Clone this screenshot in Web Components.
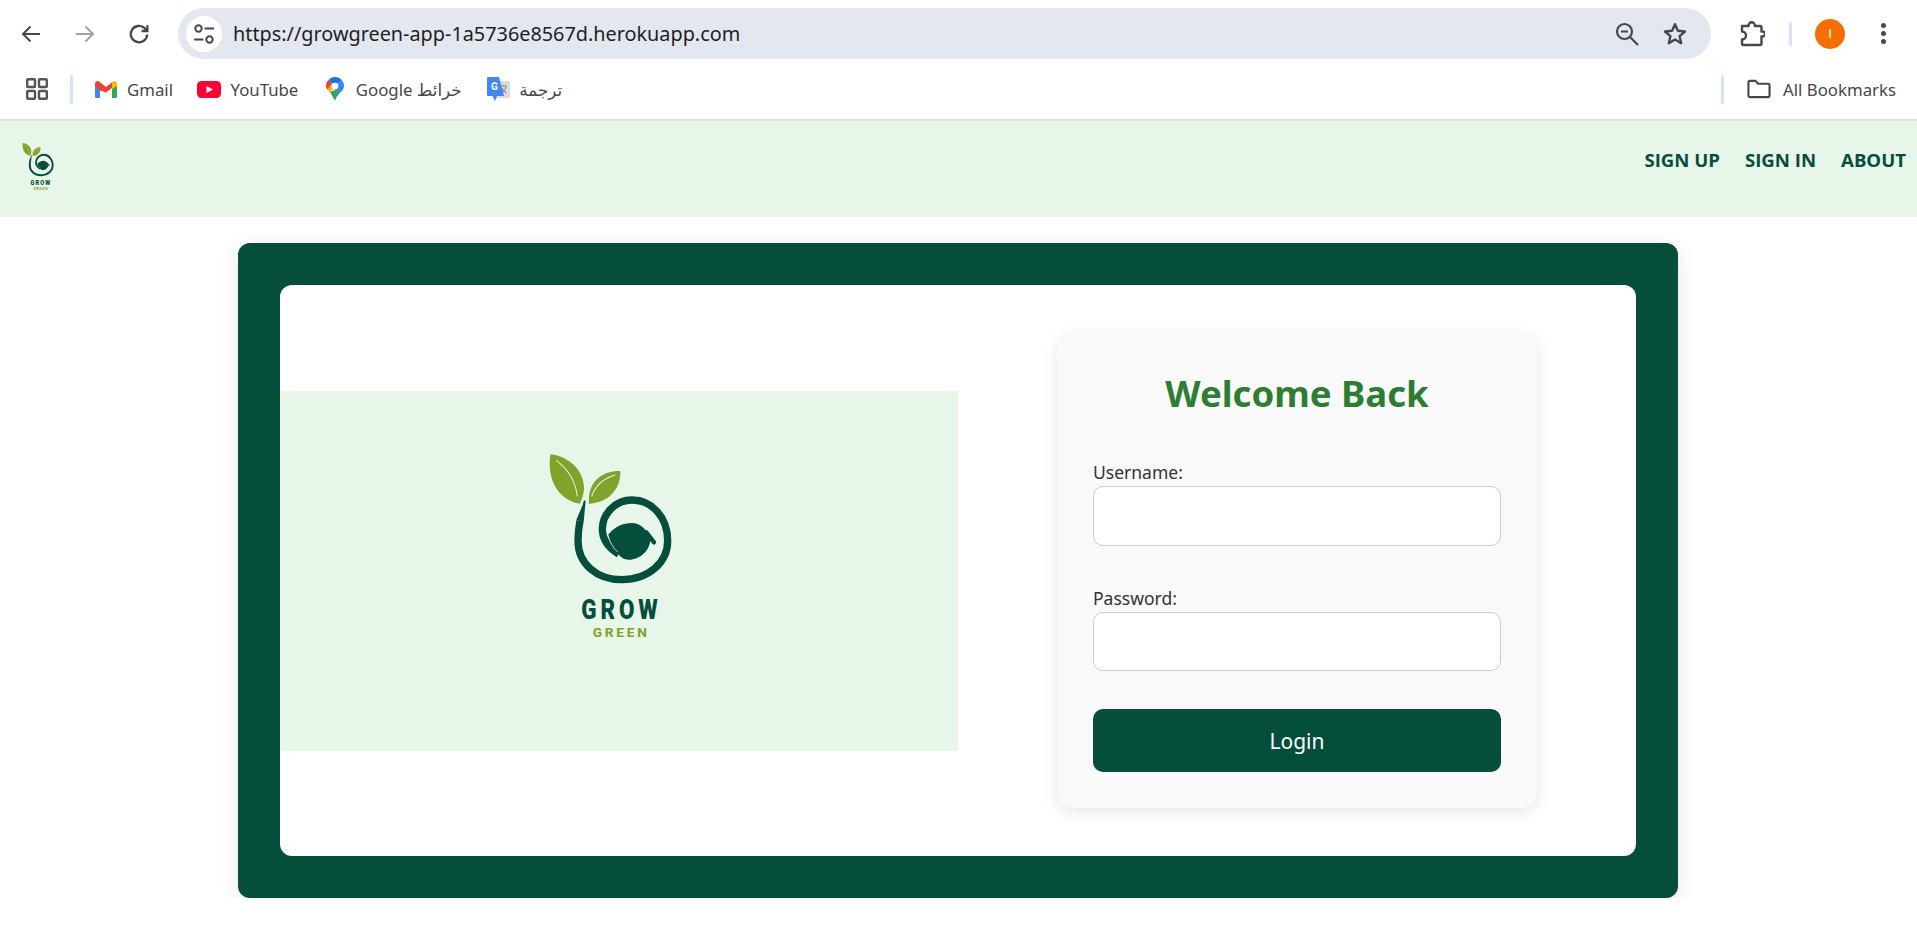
<!DOCTYPE html>
<html lang="en">
<head>
<meta charset="utf-8">
<title>Grow Green</title>
<style>
  html, body { margin: 0; padding: 0; background: #fff; overflow: hidden; }
  body { font-family: "Noto Sans", "DejaVu Sans", sans-serif; }
</style>
</head>
<body>
<browser-toolbar url="https://growgreen-app-1a5736e8567d.herokuapp.com"></browser-toolbar>
<bookmarks-bar></bookmarks-bar>
<site-nav>
  <nav-link>SIGN UP</nav-link>
  <nav-link>SIGN IN</nav-link>
  <nav-link>ABOUT</nav-link>
</site-nav>
<login-page></login-page>

<script>
const logoMarkup = `
  <svg viewBox="47 33 500 720" xmlns="http://www.w3.org/2000/svg">
    <path fill="#7fa32b" d="M90 46C148 52 192 98 191 150C190 168 184 183 178 194C122 186 78 132 90 46Z"/>
    <path fill="none" stroke="#e8f5e9" stroke-width="3" d="M108 65C140 88 165 125 171 172"/>
    <path fill="#7fa32b" d="M300 96C252 94 212 122 206 170L205 194C262 192 302 152 300 96Z"/>
    <path fill="none" stroke="#e8f5e9" stroke-width="3" d="M285 108C250 118 225 140 214 172"/>
    <path fill="#044e3b" d="M191 184L196 186C194 205 192 225 190 248L168 243C176 222 186 205 191 184Z"/>
    <path fill="none" stroke="#044e3b" stroke-width="22" d="M179 245C175 265 173 285 173 305C173 375 230 422 305 422C385 422 442 370 442 305C442 235 395 183 335 183C285 183 246 225 246 270C246 298 262 325 295 345"/>
    <path fill="#044e3b" d="M263 288C283 262 308 252 335 252C358 252 376 268 390 296C392 332 360 362 325 362C312 362 300 356 290 340C275 325 266 308 263 288Z"/>
    <path fill="none" stroke="#044e3b" stroke-width="13" stroke-linecap="round" d="M378 280L401 310"/>
    <path fill="none" stroke="#e8f5e9" stroke-width="2.500" d="M263 288C268 308 277 326 292 339"/>
    <g transform="scale(.82 1)">
      <text x="223" y="540" font-family="Roboto, sans-serif" font-weight="900" font-size="82" fill="#044e3b" textLength="280">GROW</text>
    </g>
    <text x="217" y="594" font-family="Roboto, sans-serif" font-weight="700" font-size="41" fill="#7fa32b" textLength="163">GREEN</text>
  </svg>`;

class GgLogo extends HTMLElement {
  constructor() {
    super();
    const shadow = this.attachShadow({ mode: 'open' });
    const w = this.getAttribute('width') || '167';
    shadow.innerHTML = `
      <style>
        :host { display: block; width: ${w}px; line-height: 0; }
        svg { width: 100%; height: auto; display: block; }
      </style>
      ${logoMarkup}`;
  }
}
customElements.define('gg-logo', GgLogo);

class BrowserToolbar extends HTMLElement {
  constructor() {
    super();
    const shadow = this.attachShadow({ mode: 'open' });
    shadow.innerHTML = `
      <style>
        :host { display: flex; align-items: center; height: 67px; box-sizing: border-box; padding: 0 0 0 4px; color: #474747; font-family: "Noto Sans", sans-serif; }
        .btn { width: 54px; height: 40px; display: flex; align-items: center; justify-content: center; flex: none; }
        svg { display: block; fill: none; stroke: #474747; stroke-width: 2; }
        .omni { margin-left: 12px; width: 1533px; height: 51px; flex: none; background: #e3e7f0; border-radius: 26px; display: flex; align-items: center; box-sizing: border-box; padding: 0 0 0 8px; }
        .tune { width: 36px; height: 36px; background: #fff; border-radius: 50%; display: flex; align-items: center; justify-content: center; flex: none; }
        .url { margin-left: 11px; font-size: 19.840px; color: #1f1f1f; flex: 1; white-space: nowrap; }
        .omni-btn { width: 48px; display: flex; justify-content: center; flex: none; }
        .right { display: flex; align-items: center; margin-left: 17px; }
        .sep { width: 3px; height: 24px; background: #d3e3fd; border-radius: 2px; margin: 0 24px; }
        .avatar { width: 30px; height: 30px; margin-left: -1px; border-radius: 50%; background: #f46f00; color: #fff; font: 400 13px Roboto, sans-serif; display: flex; align-items: center; justify-content: center; }
        .dots { margin-left: 36px; width: 5px; display: flex; flex-direction: column; gap: 3px; }
        .dots i { width: 5px; height: 5px; border-radius: 50%; background: #474747; display: block; }
      </style>
      <div class="btn"><svg width="22" height="22" viewBox="0 0 22 22"><path d="M20 11H3M10.500 3.500L3 11l7.500 7.500"/></svg></div>
      <div class="btn"><svg width="22" height="22" viewBox="0 0 22 22" style="stroke:#a3a3a3"><path d="M2 11h17M11.500 3.500L19 11l-7.500 7.500"/></svg></div>
      <div class="btn"><svg width="22" height="22" viewBox="0 0 22 22" style="stroke-width:2.300"><path d="M19.200 11.500a8.200 8.200 0 1 1-2.600-6.400L19 7.600"/><path d="M19.400 2.200V8h-5.800"/></svg></div>
      <div class="omni">
        <div class="tune"><svg width="26" height="26" viewBox="0 0 26 26"><circle cx="7.500" cy="7.500" r="3.200"/><path d="M13.500 7.500H23M3 18.500h9.500"/><circle cx="18.500" cy="18.500" r="3.200"/></svg></div>
        <div class="url">${this.getAttribute('url')}</div>
        <div class="omni-btn"><svg width="26" height="26" viewBox="0 0 26 26" style="stroke-width:2.200"><circle cx="10.500" cy="10.500" r="7.500"/><path d="M7 10.500h7M16 16l8 8"/></svg></div>
        <div class="omni-btn" style="margin-right:12px"><svg width="26" height="26" viewBox="0 0 26 26" style="stroke-width:2.400;stroke-linejoin:round"><path d="M13 3.200l2.900 6.600 7.100.7-5.400 4.700 1.600 7-6.200-3.700-6.200 3.700 1.600-7L3 10.500l7.100-.7z"/></svg></div>
      </div>
      <div class="right">
        <svg width="26" height="26" viewBox="0 0 26 26" style="stroke-width:2.400;stroke-linejoin:round;margin-left:11px"><path d="M3 5H9.500V4.500a3.200 3.200 0 0 1 6.400 0V5H21a1.500 1.500 0 0 1 1.500 1.500V10.500h1a2.500 2.500 0 0 1 0 5h-1V22.500A1.500 1.500 0 0 1 21 24H4.500A1.500 1.500 0 0 1 3 22.500V18.500a4 4 0 0 0 0-8z"/></svg>
        <div class="sep"></div>
        <div class="avatar">I</div>
        <div class="dots"><i></i><i></i><i></i></div>
      </div>`;
  }
}
customElements.define('browser-toolbar', BrowserToolbar);

class BookmarkItem extends HTMLElement {
  constructor() {
    super();
    const shadow = this.attachShadow({ mode: 'open' });
    shadow.innerHTML = `
      <style>
        :host { display: flex; align-items: center; gap: var(--item-gap, 9px); font-size: 16.800px; color: #474747; white-space: nowrap; }
        .icon { width: 24px; height: 24px; display: flex; align-items: center; justify-content: center; flex: none; }
      </style>
      <div class="icon"><slot name="icon"></slot></div>
      <slot></slot>`;
  }
}
customElements.define('bookmark-item', BookmarkItem);

class BookmarksBar extends HTMLElement {
  constructor() {
    super();
    const shadow = this.attachShadow({ mode: 'open' });
    shadow.innerHTML = `
      <style>
        :host { display: flex; align-items: center; height: 54px; box-sizing: border-box; padding: 0 0 8px 26px; border-bottom: 2px solid #e1e1e1; font-family: "Noto Sans", "DejaVu Sans", sans-serif; }
        .sep { width: 3px; height: 29px; background: #d3e3fd; border-radius: 2px; flex: none; }
        .apps { fill: none; stroke: #555; stroke-width: 2.400; flex: none; display: block; }
        .items { display: flex; align-items: center; gap: 24.500px; margin-left: 21px; }
        .end { margin-left: auto; display: flex; align-items: center; padding-right: 21px; }
        .end bookmark-item { margin-left: 23px; --item-gap: 12px; }
        svg { display: block; }
      </style>
      <svg class="apps" width="22" height="22" viewBox="0 0 22 22">
        <rect x="1.200" y="1.200" width="7.800" height="7.800" rx=".8"/><rect x="13" y="1.200" width="7.800" height="7.800" rx=".8"/>
        <rect x="1.200" y="13" width="7.800" height="7.800" rx=".8"/><rect x="13" y="13" width="7.800" height="7.800" rx=".8"/>
      </svg>
      <div class="sep" style="margin-left:22px"></div>
      <div class="items">
        <bookmark-item>
          <svg slot="icon" width="22" height="17" viewBox="0 0 22 17">
            <path fill="#4285f4" d="M0 2.500V15.500A1.500 1.500 0 0 0 1.500 17H5V7z"/>
            <path fill="#34a853" d="M22 2.500V15.500A1.500 1.500 0 0 1 20.500 17H17V7z"/>
            <path fill="#ea4335" d="M5 9.500L0 5.500V2.500C0 .5 2.500-.7 4 .5L11 6l7-5.500L17 7 11 11.500z"/>
            <path fill="#fbbc04" d="M17 8V1.500L18 .5C19.500-.7 22 .5 22 2.500V5z"/>
          </svg>
          Gmail
        </bookmark-item>
        <bookmark-item>
          <svg slot="icon" width="24" height="17" viewBox="0 0 24 17">
            <rect width="24" height="17" rx="4.500" fill="#ff0033"/><path fill="#fff" d="M9.500 5l6.500 3.500-6.500 3.500z"/>
          </svg>
          YouTube
        </bookmark-item>
        <bookmark-item>
          <svg slot="icon" width="18" height="24" viewBox="0 0 18 24">
            <path fill="#34a853" d="M4 15l5 9c1-3.500 3-6 5.500-9L9 13z"/>
            <path fill="#fbbc04" d="M1.500 12.500C2 13.500 3 14.500 4 15.500L9 9.500 5.500 6z"/>
            <path fill="#4285f4" d="M9 9.500l3-3.500 4-2.500C17.500 5 18 7 18 9c0 2.500-1.500 4.500-3.500 6.500L9 13z"/>
            <path fill="#ea4335" d="M2.500 3C.8 4.600 0 6.800 0 9c0 1.500.5 2.500 1.500 3.500L6 6.500z"/>
            <path fill="#1a73e8" d="M2.500 3L6 6.500 12 6 16 3.500C14.500 1.200 12 0 9 0 6.500 0 4 1 2.500 3z"/>
            <circle cx="9" cy="9" r="3.300" fill="#fff"/>
          </svg>
          Google خرائط
        </bookmark-item>
        <bookmark-item>
          <svg slot="icon" width="23" height="24" viewBox="0 0 23 24">
            <rect x="9" y="4" width="14" height="17" rx="1" fill="#dcdcdc"/>
            <path d="M13 9h7M16.500 8v1.500M14 16c3-1.500 4.500-3.500 5-6.500M15 11c1 2.500 2.500 4 4.500 5" fill="none" stroke="#8a8a8a" stroke-width="1.100"/>
            <path fill="#4285f4" d="M1 0H12L17 19H10L8 24 5.500 19H1A1 1 0 0 1 0 18V1A1 1 0 0 1 1 0Z"/>
            <text x="4" y="13" font-family="Roboto, sans-serif" font-weight="700" font-size="10" fill="#fff">G</text>
          </svg>
          ترجمة
        </bookmark-item>
      </div>
      <div class="end">
        <div class="sep"></div>
        <bookmark-item>
          <svg slot="icon" width="25" height="20" viewBox="0 0 25 20" fill="none" stroke="#474747" stroke-width="2.200" stroke-linejoin="round"><path d="M1.500 3A1.500 1.500 0 0 1 3 1.500H9L11.500 4.500H22A1.500 1.500 0 0 1 23.500 6V17A1.500 1.500 0 0 1 22 18.500H3A1.500 1.500 0 0 1 1.500 17z"/></svg>
          All Bookmarks
        </bookmark-item>
      </div>`;
  }
}
customElements.define('bookmarks-bar', BookmarksBar);

class NavLink extends HTMLElement {
  constructor() {
    super();
    const shadow = this.attachShadow({ mode: 'open' });
    shadow.innerHTML = `
      <style>
        :host { display: block; font: 700 18.600px/24px "Open Sans", sans-serif; color: #044e3b; white-space: nowrap; }
      </style>
      <slot></slot>`;
  }
}
customElements.define('nav-link', NavLink);

class SiteNav extends HTMLElement {
  constructor() {
    super();
    const shadow = this.attachShadow({ mode: 'open' });
    shadow.innerHTML = `
      <style>
        :host { display: flex; justify-content: space-between; align-items: flex-start; height: 96px; box-sizing: border-box; padding: 21px 11px 0 19px; background: #e8f5e9; }
        .links { display: flex; gap: 25px; margin-top: 6px; }
      </style>
      <gg-logo width="42.700"></gg-logo>
      <div class="links"><slot></slot></div>`;
  }
}
customElements.define('site-nav', SiteNav);

class FormField extends HTMLElement {
  constructor() {
    super();
    const shadow = this.attachShadow({ mode: 'open' });
    shadow.innerHTML = `
      <style>
        :host { display: block; }
        label { display: block; height: 25px; line-height: 23px; font-size: 17.500px; color: #333; }
        input { display: block; width: 100%; height: 59.500px; box-sizing: border-box; border: 1.500px solid #ccc; border-radius: 10px; background: #fff; padding: 0 12px; outline: none; }
      </style>
      <label for="f">${this.getAttribute('label')}</label>
      <input id="f" type="${this.getAttribute('type') || 'text'}">`;
  }
}
customElements.define('form-field', FormField);

class LoginForm extends HTMLElement {
  constructor() {
    super();
    const shadow = this.attachShadow({ mode: 'open' });
    shadow.innerHTML = `
      <style>
        :host { display: flex; flex-direction: column; width: 480px; box-sizing: border-box; padding: 36px; background: #f9f9f9; border-radius: 16px; box-shadow: 0 4px 16px rgba(0,0,0,.1); font-family: "Noto Sans", sans-serif; }
        h2 { margin: 0 0 44px; height: 48px; line-height: 48px; text-align: center; font-size: 36.500px; font-weight: 700; color: #2e7d32; }
        form-field + form-field { margin-top: 41px; }
        button { margin-top: 38px; height: 63px; border: 0; border-radius: 10px; background: #044e3b; color: #fff; font: 400 21px "Noto Sans", sans-serif; }
      </style>
      <h2>Welcome Back</h2>
      <form-field label="Username:"></form-field>
      <form-field label="Password:" type="password"></form-field>
      <button type="button">Login</button>`;
  }
}
customElements.define('login-form', LoginForm);

class LoginPage extends HTMLElement {
  constructor() {
    super();
    const shadow = this.attachShadow({ mode: 'open' });
    shadow.innerHTML = `
      <style>
        :host { display: block; padding: 26px 1px 0 0; }
        .frame { width: 1440px; margin: 0 auto; box-sizing: border-box; padding: 42px; background: #044e3b; border-radius: 12px; box-shadow: 0 4px 20px rgba(0,0,0,.1); }
        .inner { display: grid; grid-template-columns: 678px 1fr; align-items: center; background: #fff; border-radius: 12px; padding: 48px 0; }
        .art { height: 360px; background: #e8f5e9; display: flex; align-items: center; justify-content: center; }
        .side { display: flex; justify-content: center; }
      </style>
      <div class="frame">
        <div class="inner">
          <div class="art"><gg-logo width="166.700"></gg-logo></div>
          <div class="side"><login-form></login-form></div>
        </div>
      </div>`;
  }
}
customElements.define('login-page', LoginPage);
</script>
</body>
</html>
